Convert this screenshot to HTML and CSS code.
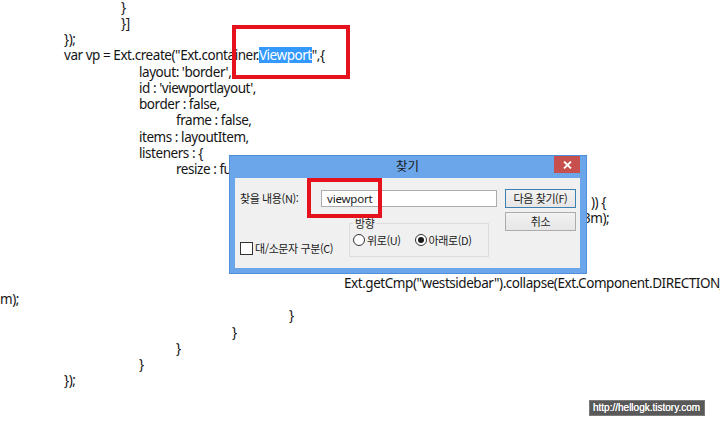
FILE: index.html
```html
<!DOCTYPE html>
<html lang="ko">
<head>
<meta charset="utf-8">
<title>찾기</title>
<link rel="stylesheet" href="styles.css">
</head>
<body>
<div class="code">
  <div class="ln in121">}</div>
  <div class="ln in121">}]</div>
  <div class="ln in64">});</div>
  <div class="ln in64">var vp = Ext.create("Ext.container.<span class="sel">Viewport</span>",{</div>
  <div class="ln in139">layout: 'border',</div>
  <div class="ln in139">id : 'viewportlayout',</div>
  <div class="ln in139">border : false,</div>
  <div class="ln in176">frame : false,</div>
  <div class="ln in139">items : layoutItem,</div>
  <div class="ln in139">listeners : {</div>
  <div class="ln in176">resize : function(obj, w, h) {</div>
  <div class="ln in232">&nbsp;</div>
  <div class="ln in591">)) {</div>
  <div class="ln in583">3m);</div>
  <div class="ln in232">&nbsp;</div>
  <div class="ln in232">&nbsp;</div>
  <div class="ln in232">&nbsp;</div>
  <div class="ln in344">Ext.getCmp("westsidebar").collapse(Ext.Component.DIRECTION_LE</div>
  <div class="ln in0">m);</div>
  <div class="ln in289">}</div>
  <div class="ln in232">}</div>
  <div class="ln in176">}</div>
  <div class="ln in139">}</div>
  <div class="ln in64">});</div>
</div>

<div class="mark mark-top"></div>

<div class="dialog">
  <div class="titlebar">
    <span class="title">찾기</span>
    <span class="close">
      <svg width="9" height="8" viewBox="0 0 9 8"><path d="M1 0.5 L8 7.5 M8 0.5 L1 7.5" stroke="#fff" stroke-width="1.8"/></svg>
    </span>
  </div>
  <div class="client">
    <div class="left">
      <div class="row1">
        <span class="lbl">찾을 내용(N):</span>
        <div class="input">viewport</div>
      </div>
      <div class="row2">
        <span class="check"><span class="box"></span>대/소문자 구분(C)</span>
        <fieldset class="dir">
          <legend>방향</legend>
          <div class="radios">
            <span class="radio"><span class="circle"></span>위로(U)</span>
            <span class="radio second"><span class="circle on"></span>아래로(D)</span>
          </div>
        </fieldset>
      </div>
    </div>
    <div class="buttons">
      <div class="btn default">다음 찾기(F)</div>
      <div class="btn">취소</div>
    </div>
  </div>
</div>

<div class="mark mark-dlg"></div>

<div class="watermark">http://hellogk.tistory.com</div>
</body>
</html>
```
FILE: styles.css
```css
html, body {
  margin: 0;
  padding: 0;
  background: #ffffff;
  overflow: hidden;
  width: 720px;
  height: 427px;
}

body {
  position: relative;
  font-family: "Noto Sans", "Noto Sans CJK KR", sans-serif;
}

.code {
  margin-top: -1.5px;
  color: #141414;
  font-size: 13.5px;
  letter-spacing: -0.45px;
  line-height: 16.25px;
  white-space: nowrap;
}

.ln { height: 16.25px; }
.in0 { padding-left: 0; }
.in64 { padding-left: 64px; }
.in121 { padding-left: 121px; }
.in139 { padding-left: 139px; }
.in176 { padding-left: 176px; }
.in232 { padding-left: 232px; }
.in289 { padding-left: 289px; }
.in344 { padding-left: 344px; }
.in583 { padding-left: 583px; }
.in591 { padding-left: 591px; }

.sel {
  display: inline-block;
  background: #3399ff;
  color: #ffffff;
  height: 16px;
  line-height: 16px;
  vertical-align: top;
}

.mark {
  position: absolute;
  border: 4px solid #e5111c;
  box-sizing: border-box;
  z-index: 5;
}
.mark-top { left: 232px; top: 25px; width: 118px; height: 54px; }
.mark-dlg { left: 307px; top: 178px; width: 75px; height: 40px; }

.dialog {
  position: absolute;
  left: 229px;
  top: 155px;
  width: 358px;
  height: 119px;
  box-sizing: border-box;
  background: #6ba6ea;
  border: 1px solid #4f8fdc;
  padding: 0 6px 5px 5px;
  font-family: "Noto Sans CJK KR", "Noto Sans", sans-serif;
  font-size: 11px;
  letter-spacing: -0.4px;
  color: #1a1a1a;
}

.titlebar {
  height: 22px;
  display: grid;
  grid-template-columns: 1fr auto 1fr;
  align-items: start;
}
.title {
  grid-column: 2;
  font-size: 12.5px;
  letter-spacing: 0;
  line-height: 20px;
  color: #1a1a1a;
}
.close {
  grid-column: 3;
  justify-self: end;
  width: 26px;
  height: 17px;
  background: #c7504f;
  display: flex;
  align-items: center;
  justify-content: center;
}

.client {
  height: 90px;
  box-sizing: border-box;
  background: #f0f0f0;
  display: flex;
  padding: 12px 0 0 6px;
}

.left { width: 264px; }

.row1 {
  display: flex;
  align-items: center;
  height: 17px;
}
.lbl { width: 81px; margin-left: -1px; line-height: 17px; }
.input {
  width: 176px;
  height: 17px;
  box-sizing: border-box;
  background: #ffffff;
  border: 1px solid #abadb3;
  padding-left: 5px;
  line-height: 15px;
  font-family: "Noto Sans", sans-serif;
  font-size: 11.5px;
  letter-spacing: -0.2px;
}

.row2 {
  display: flex;
  align-items: flex-end;
  margin-top: 10px;
}
.check {
  width: 109px;
  margin-left: -1px;
  margin-bottom: 2px;
  display: flex;
  align-items: center;
  line-height: 14px;
}
.box {
  width: 13px;
  height: 13px;
  box-sizing: border-box;
  border: 1px solid #333333;
  background: #ffffff;
  margin-right: 2px;
}

.dir {
  width: 140px;
  box-sizing: border-box;
  margin: 0;
  border: 1px solid #dcdcdc;
  padding: 0 3px 8px 3px;
}
.dir legend {
  padding: 0 2px;
  line-height: 12px;
}
.radios {
  display: flex;
  align-items: center;
  height: 16px;
  margin-top: 3px;
}
.radio {
  display: flex;
  align-items: center;
}
.radio.second { margin-left: 14px; }
.circle {
  width: 12px;
  height: 12px;
  box-sizing: border-box;
  border: 1px solid #333333;
  border-radius: 50%;
  background: #ffffff;
  margin-right: 2px;
  display: flex;
  align-items: center;
  justify-content: center;
}
.circle.on::after {
  content: "";
  width: 6px;
  height: 6px;
  border-radius: 50%;
  background: #1a1a1a;
}

.buttons {
  width: 71px;
  margin-top: -1px;
  display: flex;
  flex-direction: column;
  gap: 4px;
}
.btn {
  height: 19px;
  box-sizing: border-box;
  border: 1px solid #acacac;
  background: linear-gradient(#f2f2f2, #e6e6e6);
  text-align: center;
  line-height: 17px;
}
.btn.default { border-color: #3c7fb1; }

.watermark {
  position: absolute;
  left: 589px;
  top: 400px;
  width: 116px;
  height: 16px;
  box-sizing: border-box;
  background: #595959;
  border: 1px solid #7a7a7a;
  color: #ffffff;
  font-family: "Liberation Sans", sans-serif;
  font-size: 10px;
  line-height: 14px;
  padding-left: 3px;
  white-space: nowrap;
  text-shadow: 0 0 0.5px #ffffff;
}
```
